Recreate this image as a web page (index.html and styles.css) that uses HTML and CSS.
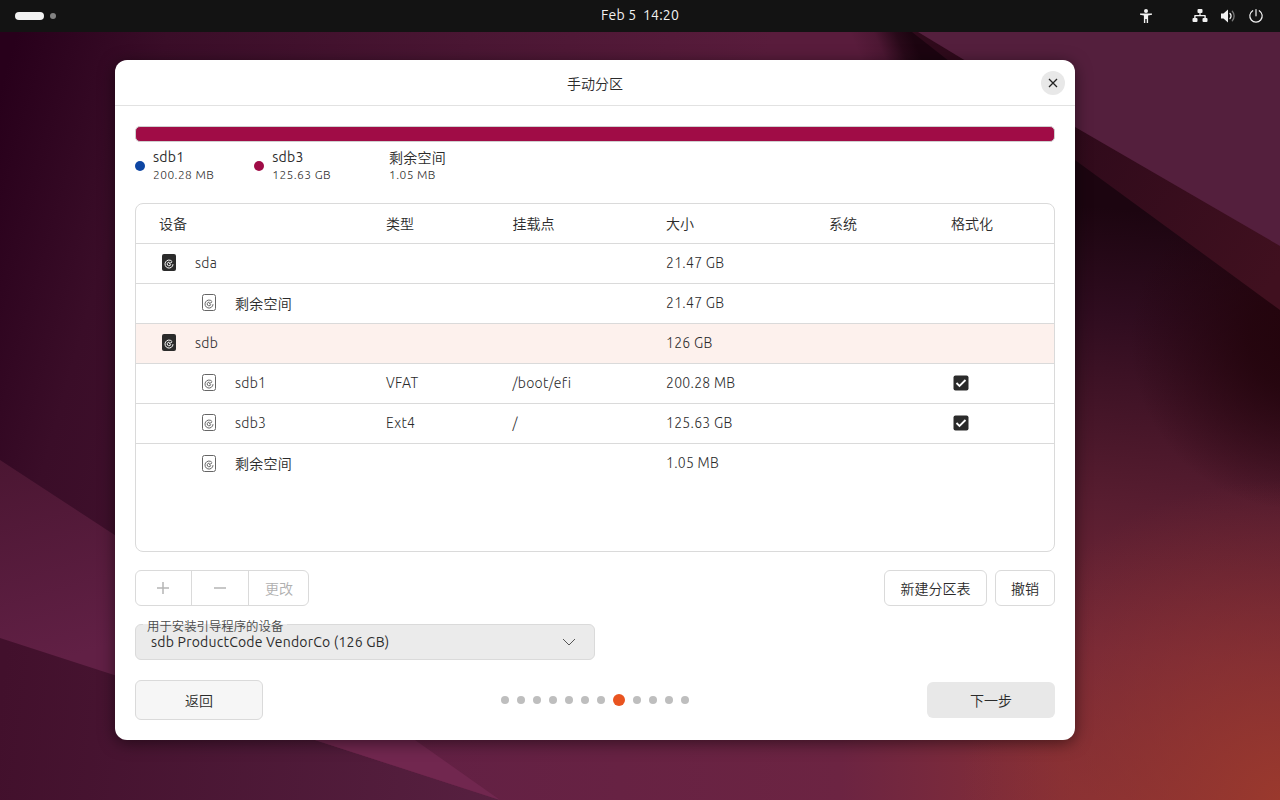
FILE: index.html
```html
<!DOCTYPE html>
<html lang="zh-CN">
<head>
    <meta charset="UTF-8">
    <meta name="viewport" content="width=device-width, initial-scale=1.0">
    <title>手动分区</title>
    <link rel="stylesheet" href="styles.css">
</head>
<body>
    <svg class="wallpaper" viewBox="0 0 1280 800" preserveAspectRatio="none">
        <defs>
            <linearGradient id="base" gradientUnits="userSpaceOnUse" x1="0" y1="90" x2="700" y2="290">
                <stop offset="0" stop-color="#28001b"/>
                <stop offset="0.2" stop-color="#3a0d28"/>
                <stop offset="0.6" stop-color="#4a1633"/>
                <stop offset="1" stop-color="#591c3c"/>
            </linearGradient>
            <linearGradient id="left" gradientUnits="userSpaceOnUse" x1="0" y1="460" x2="60" y2="660">
                <stop offset="0" stop-color="#4b1632"/>
                <stop offset="1" stop-color="#612045"/>
            </linearGradient>
            <linearGradient id="bottom" gradientUnits="userSpaceOnUse" x1="0" y1="700" x2="500" y2="760">
                <stop offset="0" stop-color="#42102c"/>
                <stop offset="1" stop-color="#572040"/>
            </linearGradient>
            <linearGradient id="right" gradientUnits="userSpaceOnUse" x1="1185" y1="215" x2="1130" y2="800">
                <stop offset="0" stop-color="#1c0510"/>
                <stop offset="0.18" stop-color="#2f0c1f"/>
                <stop offset="0.5" stop-color="#581d30"/>
                <stop offset="0.75" stop-color="#752838"/>
                <stop offset="1" stop-color="#883035"/>
            </linearGradient>
            <linearGradient id="floor" gradientUnits="userSpaceOnUse" x1="400" y1="0" x2="1280" y2="0">
                <stop offset="0" stop-color="#622044"/>
                <stop offset="0.5" stop-color="#6c2442"/>
                <stop offset="0.75" stop-color="#862f36"/>
                <stop offset="1" stop-color="#8e342f"/>
            </linearGradient>
            <radialGradient id="glow" gradientUnits="userSpaceOnUse" cx="1280" cy="800" r="320">
                <stop offset="0" stop-color="#9a392d"/>
                <stop offset="1" stop-color="#8c3231" stop-opacity="0"/>
            </radialGradient>
            <linearGradient id="fold" gradientUnits="userSpaceOnUse" x1="1075" y1="120" x2="1280" y2="270">
                <stop offset="0" stop-color="#2f0a1b"/>
                <stop offset="1" stop-color="#40101f"/>
            </linearGradient>
            <linearGradient id="shade" gradientUnits="userSpaceOnUse" x1="862" y1="62" x2="914" y2="40">
                <stop offset="0" stop-color="#1c0410" stop-opacity="0"/>
                <stop offset="0.4" stop-color="#1c0410" stop-opacity="0.2"/>
                <stop offset="0.75" stop-color="#1c0410" stop-opacity="0.8"/>
                <stop offset="1" stop-color="#1c0410"/>
            </linearGradient>
            <radialGradient id="deep" gradientUnits="userSpaceOnUse" cx="1300" cy="340" r="170">
                <stop offset="0" stop-color="#23040c"/>
                <stop offset="0.3" stop-color="#23040c" stop-opacity="0.85"/>
                <stop offset="1" stop-color="#23040c" stop-opacity="0"/>
            </radialGradient>
        </defs>
        <rect width="1280" height="800" fill="url(#base)"/>
        <path d="M0 460 520 800H0Z" fill="url(#left)"/>
        <path d="M0 638 500 800H0Z" fill="url(#bottom)"/>
        <path d="M1060 130 1280 290V800H1060Z" fill="url(#right)"/>
        <path d="M315 740 400 700H1070V800H500Z" fill="url(#floor)"/>
        <path d="M315 740H415L500 800Z" fill="#71274f"/>
        <rect x="1060" y="160" width="220" height="360" fill="url(#deep)"/>
        <rect x="960" y="480" width="320" height="320" fill="url(#glow)"/>
        <path d="M840 32H930L1000 80H840Z" fill="url(#shade)"/>
        <path d="M912 32H920L1280 240V310L1075 160Z" fill="url(#fold)"/>
        <path d="M918 32H1280V246L1075 127Z" fill="#541f3d"/>
    </svg>

    <header class="topbar">
        <div class="workspaces"><span class="pill"></span><span class="dot"></span></div>
        <div class="clock">Feb 5&nbsp; 14:20</div>
        <div class="tray">
            <svg class="tray-a11y" width="16" height="16" viewBox="0 0 16 16" fill="#f2f2f2">
                <circle cx="8" cy="3" r="2"/>
                <path d="M2 5.500h12v1.300l-3.900.8V15H8.700v-4H7.300v4H5.900V7.600L2 6.800z"/>
            </svg>
            <svg width="16" height="16" viewBox="0 0 16 16" fill="#f2f2f2">
                <rect x="5.500" y="1" width="5" height="4" rx="1"/>
                <rect x="0.500" y="10" width="5" height="4" rx="1"/>
                <rect x="10.500" y="10" width="5" height="4" rx="1"/>
                <path d="M7.400 4h1.200v3H13a.8.8 0 0 1 .8.8V11h-1.400V8.200H3.600V11H2.200V7.800a.8.8 0 0 1 .8-.8h4.400z"/>
            </svg>
            <svg width="16" height="16" viewBox="0 0 16 16" fill="none" stroke-linecap="round">
                <path d="M1 5.500h2.500L8 1.500v13l-4.500-4H1z" fill="#f2f2f2"/>
                <path d="M10 5.500a3.500 3.500 0 0 1 0 5" stroke="#f2f2f2" stroke-width="1.300"/>
                <path d="M12.300 3.300a7 7 0 0 1 0 9.400" stroke="#777" stroke-width="1.300"/>
            </svg>
            <svg width="16" height="16" viewBox="0 0 16 16" fill="none" stroke="#f2f2f2" stroke-width="1.200" stroke-linecap="round">
                <path d="M8 1.500v6.300M4.700 2.700a6.200 6.200 0 1 0 6.600 0"/>
            </svg>
        </div>
    </header>

    <main class="window">
        <div class="titlebar">
            <h1>手动分区</h1>
            <button class="close" aria-label="关闭">
                <svg width="10" height="10" viewBox="0 0 10 10" stroke="#222" stroke-width="1.300"><path d="M1 1l8 8M9 1l-8 8"/></svg>
            </button>
        </div>

        <div class="content">
            <div class="usage-bar"></div>
            <div class="legend">
                <div class="legend-item"><span class="swatch blue"></span><div><p class="part">sdb1</p><p class="size">200.28 MB</p></div></div>
                <div class="legend-item"><span class="swatch red"></span><div><p class="part">sdb3</p><p class="size">125.63 GB</p></div></div>
                <div class="legend-item"><span class="swatch"></span><div><p class="part zh">剩余空间</p><p class="size">1.05 MB</p></div></div>
            </div>

            <div class="table">
                <div class="row head"><span>设备</span><span>类型</span><span>挂载点</span><span>大小</span><span>系统</span><span>格式化</span></div>
                <div class="row">
                    <span class="device"><svg class="disk" viewBox="0 0 14 17"><use href="#disk-full"/></svg>sda</span>
                    <span></span><span></span><span>21.47 GB</span>
                </div>
                <div class="row">
                    <span class="device child"><svg class="disk" viewBox="0 0 14 17"><use href="#disk-line"/></svg><b>剩余空间</b></span>
                    <span></span><span></span><span>21.47 GB</span>
                </div>
                <div class="row selected">
                    <span class="device"><svg class="disk" viewBox="0 0 14 17"><use href="#disk-full"/></svg>sdb</span>
                    <span></span><span></span><span>126 GB</span>
                </div>
                <div class="row">
                    <span class="device child"><svg class="disk" viewBox="0 0 14 17"><use href="#disk-line"/></svg>sdb1</span>
                    <span>VFAT</span><span>/boot/efi</span><span>200.28 MB</span><span></span>
                    <span><svg class="check" viewBox="0 0 16 16"><use href="#check"/></svg></span>
                </div>
                <div class="row">
                    <span class="device child"><svg class="disk" viewBox="0 0 14 17"><use href="#disk-line"/></svg>sdb3</span>
                    <span>Ext4</span><span>/</span><span>125.63 GB</span><span></span>
                    <span><svg class="check" viewBox="0 0 16 16"><use href="#check"/></svg></span>
                </div>
                <div class="row">
                    <span class="device child"><svg class="disk" viewBox="0 0 14 17"><use href="#disk-line"/></svg><b>剩余空间</b></span>
                    <span></span><span></span><span>1.05 MB</span>
                </div>
            </div>

            <div class="actions">
                <div class="button-group">
                    <button disabled aria-label="添加"><svg width="12" height="12" viewBox="0 0 12 12"><path d="M6 0v12M0 6h12"/></svg></button>
                    <button disabled aria-label="移除"><svg width="12" height="12" viewBox="0 0 12 12"><path d="M0 6h12"/></svg></button>
                    <button disabled>更改</button>
                </div>
                <div class="table-buttons">
                    <button class="outlined">新建分区表</button>
                    <button class="outlined">撤销</button>
                </div>
            </div>

            <div class="boot-select">
                <span class="label">用于安装引导程序的设备</span>
                <span class="value">sdb ProductCode VendorCo (126 GB)</span>
                <svg width="14" height="8" viewBox="0 0 14 8" fill="none" stroke="#555" stroke-width="1"><path d="M1 1l6 6 6-6"/></svg>
            </div>

            <div class="footer">
                <button class="back">返回</button>
                <div class="steps">
                    <i></i><i></i><i></i><i></i><i></i><i></i><i></i><i class="current"></i><i></i><i></i><i></i><i></i>
                </div>
                <button class="next">下一步</button>
            </div>
        </div>
    </main>

    <!-- shared icons -->
    <svg class="symbols">
        <symbol id="disk-full" viewBox="0 0 14 17">
            <rect width="14" height="17" rx="2" fill="#2b2b2b"/>
            <path d="M9.800 7.200A4 4 0 1 0 11 10.200M7 10l3.200-2.200M8.800 10.200a1.800 1.800 0 1 1-1.200-1.900" fill="none" stroke="#fff" stroke-width="1"/>
        </symbol>
        <symbol id="disk-line" viewBox="0 0 14 17">
            <rect x="0.500" y="0.500" width="13" height="16" rx="2" fill="none" stroke="#666"/>
            <path d="M9.800 7.200A4 4 0 1 0 11 10.200M7 10l3.200-2.200M8.800 10.200a1.800 1.800 0 1 1-1.200-1.900" fill="none" stroke="#555" stroke-width="0.900"/>
        </symbol>
        <symbol id="check" viewBox="0 0 16 16">
            <rect x="0.500" y="0.500" width="15" height="15" rx="2" fill="#2b2b2b"/>
            <path d="M3.500 8l3 3L12.500 5" fill="none" stroke="#fff" stroke-width="1.800"/>
        </symbol>
    </svg>
</body>
</html>
```

FILE: styles.css
```css
* {
    box-sizing: border-box;
}
body {
    margin: 0;
    height: 100vh;
    overflow: hidden;
    background-color: #42102c;
    font-family: "Ubuntu", "Noto Sans", "Noto Sans CJK SC", sans-serif;
    font-size: 14px;
    font-weight: 300;
    color: #2b2b2b;
}
h1, p {
    margin: 0;
    font-weight: inherit;
}
svg {
    display: block;
}
button {
    padding: 0;
    border: none;
    font: inherit;
    color: inherit;
    background: none;
}
.wallpaper {
    position: absolute;
    inset: 0;
    width: 100%;
    height: 100%;
    z-index: -1;
}
.symbols {
    position: absolute;
    width: 0;
    height: 0;
}

/* top bar */
.topbar {
    display: grid;
    grid-template-columns: 1fr auto 1fr;
    align-items: center;
    height: 32px;
    padding: 0 16px 0 15px;
    background-color: #131313;
    color: #f2f2f2;
}
.workspaces {
    display: flex;
    align-items: center;
    gap: 6px;
}
.pill {
    width: 29px;
    height: 8px;
    border-radius: 4px;
    background-color: #f2f2f2;
}
.dot {
    width: 6px;
    height: 6px;
    border-radius: 50%;
    background-color: #828282;
}
.clock {
    font-weight: 400;
    line-height: 20px;
    padding: 0 0 2px 1px;
    letter-spacing: 0.18px;
}
.tray {
    display: flex;
    justify-content: flex-end;
    gap: 12px;
}
.tray-a11y {
    margin-right: 26px;
}

/* installer window */
.window {
    width: 960px;
    height: 680px;
    margin: 28px 0 0 115px;
    border-radius: 12px;
    background-color: #fff;
    box-shadow: 0 3px 16px rgba(0,0,0,0.5);
}
.titlebar {
    display: grid;
    grid-template-columns: 1fr auto 1fr;
    align-items: center;
    height: 46px;
    padding-right: 10px;
    border-bottom: 1px solid #e2e2e2;
}
h1 {
    grid-column: 2;
    padding-left: 10px;
    font-size: 14px;
    font-weight: 350;
}
.close {
    display: flex;
    justify-content: center;
    align-items: center;
    justify-self: end;
    width: 24px;
    height: 24px;
    border-radius: 50%;
    background-color: #e8e8e8;
}
.content {
    padding: 20px;
}
.usage-bar {
    height: 16px;
    border: 1px solid #cfcfcf;
    border-radius: 5px;
    background-color: #a00c46;
}
.legend {
    display: flex;
    gap: 40px;
    height: 61px;
    padding-top: 6px;
}
.legend-item {
    display: flex;
    gap: 8px;
}
.swatch {
    width: 10px;
    height: 10px;
    margin-top: 13px;
    border-radius: 50%;
}
.blue {
    background-color: #0e46a3;
}
.red {
    background-color: #a00c46;
}
.part {
    height: 18px;
    font-weight: 400;
    line-height: 18px;
    letter-spacing: 0.25px;
}
.zh {
    padding-top: 1px;
    font-weight: 350;
}
.size {
    font-size: 12px;
    line-height: 18px;
    letter-spacing: 0.43px;
}

/* partition table */
.table {
    height: 349px;
    border: 1px solid #dadada;
    border-radius: 8px;
    overflow: hidden;
}
.row {
    display: grid;
    grid-template-columns: 227px 126.500px 153.500px 163px 122px 1fr;
    align-items: center;
    height: 40px;
    padding: 0 0 2px 23px;
    border-bottom: 1px solid #dadada;
    letter-spacing: 0.28px;
}
.row:last-child {
    border-bottom: none;
}
.head {
    letter-spacing: 0;
}
.head, .row b {
    font-weight: 350;
}
.selected {
    background-color: #fdf1ed;
}
.device {
    display: flex;
    align-items: center;
    gap: 19px;
    padding-left: 3px;
}
.child {
    padding-left: 43px;
}
.disk {
    width: 14px;
    height: 17px;
}
.check {
    width: 16px;
    height: 16px;
    margin-left: 2px;
}

/* buttons under the table */
.actions {
    display: flex;
    justify-content: space-between;
    height: 36px;
    margin-top: 18px;
}
.button-group {
    display: flex;
    border: 1px solid #dadada;
    border-radius: 6px;
    color: #b0b0b0;
}
.button-group button {
    display: flex;
    justify-content: center;
    align-items: center;
    width: 57px;
    border-right: 1px solid #dadada;
}
.button-group button:first-child {
    width: 56px;
    padding-right: 1px;
}
.button-group button:last-child {
    width: 59px;
    padding-left: 1px;
    border-right: none;
    font-weight: 350;
}
.button-group svg {
    stroke: #b5b5b5;
    stroke-width: 1.5;
}
.table-buttons {
    display: flex;
    gap: 8px;
}
.outlined {
    width: 60px;
    border: 1px solid #dadada;
    border-radius: 6px;
    font-weight: 350;
}
.outlined:first-child {
    width: 103px;
}
.boot-select {
    position: relative;
    display: flex;
    justify-content: space-between;
    align-items: center;
    width: 460px;
    height: 36px;
    margin-top: 18px;
    padding: 0 18px 0 15px;
    border: 1px solid #dadada;
    border-radius: 6px;
    background-color: #ebebeb;
}
.label {
    position: absolute;
    top: -8px;
    left: 7px;
    padding: 0 4px;
    font-size: 12.4px;
    font-weight: 350;
    line-height: 18px;
    color: #4a4a4a;
    background: linear-gradient(#fff 7px, #ebebeb 7px);
}
.value {
    font-weight: 400;
    letter-spacing: 0.22px;
}

/* navigation */
.footer {
    display: grid;
    grid-template-columns: 1fr auto 1fr;
    align-items: center;
    margin-top: 20px;
}
.back, .next {
    width: 128px;
    border-radius: 6px;
    font-weight: 350;
}
.back {
    height: 40px;
    border: 1px solid #dadada;
    background-color: #f6f6f6;
}
.next {
    height: 36px;
    justify-self: end;
    background-color: #e8e8e8;
}
.steps {
    display: flex;
    align-items: center;
    gap: 8px;
}
.steps i {
    width: 8px;
    height: 8px;
    border-radius: 50%;
    background-color: #bebebe;
}
.steps .current {
    width: 12px;
    height: 12px;
    background-color: #e95420;
}
```
